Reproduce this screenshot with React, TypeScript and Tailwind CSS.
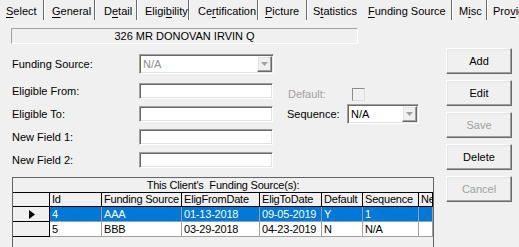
import React from 'react';

const sunken =
  'border border-t-[#a0a0a0] border-l-[#a0a0a0] border-r-white border-b-white shadow-[inset_1px_1px_0_#696969,inset_-1px_-1px_0_#e3e3e3]';
const raised =
  'border border-t-white border-l-white border-r-[#696969] border-b-[#696969] shadow-[inset_-1px_-1px_0_#a0a0a0,inset_1px_1px_0_#e3e3e3]';

type Tab = { pre: string; key: string; post: string; cls: string; sep: boolean };

const tabs: Tab[] = [
  { pre: '', key: 'S', post: 'elect', cls: 'w-[45px] pl-[6px]', sep: true },
  { pre: '', key: 'G', post: 'eneral', cls: 'w-[51px] pl-[7px]', sep: true },
  { pre: 'D', key: 'e', post: 'tail', cls: 'w-[42px] pl-[8px]', sep: true },
  { pre: 'Eligi', key: 'b', post: 'ility', cls: 'w-[52px] pl-[7px]', sep: true },
  { pre: 'Ce', key: 'r', post: 'tification', cls: 'w-[69px] pl-[8px]', sep: true },
  { pre: '', key: 'P', post: 'icture', cls: 'w-[49px] pl-[6px]', sep: true },
  { pre: 'S', key: 't', post: 'atistics', cls: 'w-[54px] pl-[5px]', sep: false },
  { pre: '', key: 'F', post: 'unding Source', cls: 'w-[91px] pl-[6px]', sep: true },
  { pre: 'M', key: 'i', post: 'sc', cls: 'w-[35px] pl-[6px]', sep: true },
  { pre: 'Pro', key: 'v', post: 'ider', cls: 'w-[60px] pl-[5px]', sep: false },
];

const Combo: React.FC<{ value: string; disabled?: boolean; className: string }> = ({ value, disabled, className }) => (
  <div className={`${sunken} ${className} bg-white flex items-stretch p-[1px]`}>
    <span className={`flex-1 pl-[2px] flex items-center ${disabled ? 'text-[#8c8c8c]' : 'text-black'}`}>{value}</span>
    <div className={`${raised} w-[15px] bg-[#f0f0f0] flex items-center justify-center`}>
      <svg width="7" height="4" viewBox="0 0 7 4">
        <polygon points="0,0 7,0 3.5,4" fill="#a0a0a0" />
      </svg>
    </div>
  </div>
);

const TextBox: React.FC = () => <div className={`${sunken} w-[134px] h-[16px] bg-white`} />;

const cols = [
  { label: 'Id', cls: 'w-[52px]' },
  { label: 'Funding Source', cls: 'w-[80px]' },
  { label: 'EligFromDate', cls: 'w-[78px]' },
  { label: 'EligToDate', cls: 'w-[62px]' },
  { label: 'Default', cls: 'w-[41px]' },
  { label: 'Sequence', cls: 'w-[56px]' },
  { label: 'New Field 1', cls: 'flex-1' },
];

const rows = [
  ['4', 'AAA', '01-13-2018', '09-05-2019', 'Y', '1', ''],
  ['5', 'BBB', '03-29-2018', '04-23-2019', 'N', 'N/A', ''],
];

const Button: React.FC<{ label: string; disabled?: boolean }> = ({ label, disabled }) => (
  <div
    className={`${raised} w-[66px] h-[26px] bg-[#f0f0f0] flex items-center justify-center ${disabled ? 'text-[#a0a0a0]' : 'text-black'}`}
  >
    {label}
  </div>
);

export default function App() {
  return (
    <div className="w-[519px] h-[247px] overflow-hidden bg-[#f0f0f0] text-[11px] leading-none text-black font-['Liberation_Sans',Arial,sans-serif]">
      {/* tab strip */}
      <div className="h-[20px] flex whitespace-nowrap overflow-hidden">
        {tabs.map((t, i) => (
          <div
            key={i}
            className={`${t.cls} shrink-0 h-full flex items-center pt-[3px] ${t.sep ? 'border-r border-r-white shadow-[inset_-1px_0_0_#696969]' : ''}`}
          >
            {t.pre}
            <span className="underline underline-offset-[2px]">{t.key}</span>
            {t.post}
          </div>
        ))}
      </div>

      {/* client name */}
      <div className="mt-[8px] ml-[11px] w-[347px] h-[16px] border border-t-[#a0a0a0] border-l-[#a0a0a0] border-r-white border-b-white flex items-center justify-center">
        326 MR DONOVAN IRVIN Q
      </div>

      <div className="flex h-[203px]">
        {/* left side */}
        <div className="w-[434px] pl-[12px] pt-[10px] flex flex-col">
          <div className="h-[20px] flex items-center">
            <span className="w-[127px]">Funding Source:</span>
            <Combo value="N/A" disabled className="w-[135px] h-[20px]" />
          </div>

          <div className="mt-[9px] h-[16px] flex items-center">
            <span className="w-[127px]">Eligible From:</span>
            <TextBox />
            <div className="ml-[15px] mt-[7px] flex items-center">
              <span className="w-[64px] text-[#a0a0a0]">Default:</span>
              <div className="w-[13px] h-[13px] bg-[#f0f0f0] border border-t-[#8c8c8c] border-l-[#8c8c8c] border-r-[#dcdcdc] border-b-[#dcdcdc]" />
            </div>
          </div>

          <div className="mt-[7px] h-[16px] flex items-center">
            <span className="w-[127px]">Eligible To:</span>
            <TextBox />
            <span className="ml-[14px] w-[60px]">Sequence:</span>
            <Combo value="N/A" className="w-[72px] h-[20px]" />
          </div>

          <div className="mt-[7px] h-[16px] flex items-center">
            <span className="w-[127px]">New Field 1:</span>
            <TextBox />
          </div>

          <div className="mt-[7px] h-[16px] flex items-center">
            <span className="w-[127px]">New Field 2:</span>
            <TextBox />
          </div>

          {/* grid */}
          <div className="mt-[9px] w-[422px] flex-1 border border-[#646464] border-b-0 bg-[#f0f0f0] flex flex-col whitespace-nowrap overflow-hidden tracking-[-0.2px]">
            <div className="h-[15px] border-b border-black flex items-center justify-center shrink-0">
              This Client&apos;s&nbsp; Funding Source(s):
            </div>
            <div className="h-[14px] border-b border-black flex shrink-0">
              <div className="w-[37px] border-r border-black" />
              {cols.map((c) => (
                <div key={c.label} className={`${c.cls} border-r border-black pl-[2px] flex items-center overflow-hidden`}>
                  {c.label}
                </div>
              ))}
            </div>
            {rows.map((r, ri) => {
              const sel = ri === 0;
              return (
                <div key={ri} className="h-[15px] flex shrink-0">
                  <div className="w-[37px] border-r border-b border-black flex items-center justify-center">
                    {sel && (
                      <svg width="6" height="9" viewBox="0 0 6 9" className="ml-[2px]">
                        <polygon points="0,0 6,4.5 0,9" fill="#000" />
                      </svg>
                    )}
                  </div>
                  {cols.map((c, ci) => (
                    <div
                      key={ci}
                      className={`${c.cls} border-r border-b border-[#a0a0a0] pl-[2px] flex items-center overflow-hidden ${sel ? 'bg-[#0078d7] text-white' : 'bg-white'}`}
                    >
                      {r[ci]}
                    </div>
                  ))}
                </div>
              );
            })}
          </div>
        </div>

        {/* buttons */}
        <div className="ml-[12px] pt-[4px] flex flex-col gap-[6px]">
          <Button label="Add" />
          <Button label="Edit" />
          <Button label="Save" disabled />
          <Button label="Delete" />
          <Button label="Cancel" disabled />
        </div>
      </div>
    </div>
  );
}
